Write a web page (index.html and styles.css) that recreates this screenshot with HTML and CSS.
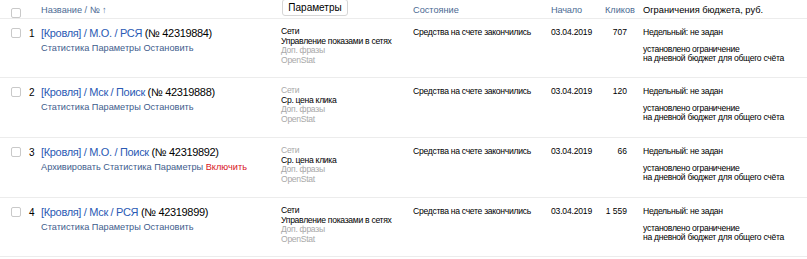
FILE: index.html
```html
<!DOCTYPE html>
<html lang="ru">
<head>
<meta charset="utf-8">
<link rel="stylesheet" href="styles.css">
</head>
<body>
<div class="table">
  <div class="row head">
    <div class="c-check"><span class="cb"></span></div>
    <div class="c-num"></div>
    <div class="c-name"><span class="hl">Название / № ↑</span></div>
    <div class="c-params"><button class="pbtn">Параметры</button></div>
    <div class="c-state"><span class="hl">Состояние</span></div>
    <div class="c-start"><span class="hl">Начало</span></div>
    <div class="c-clicks"><span class="hl">Кликов</span></div>
    <div class="c-budget">Ограничения бюджета, руб.</div>
  </div>

  <div class="row r-short">
    <div class="c-check"><span class="cb"></span></div>
    <div class="c-num">1</div>
    <div class="c-name">
      <div class="title"><a class="tl">[Кровля] / М.О. / РСЯ</a> (№ 42319884)</div>
      <div class="acts"><a>Статистика</a> <a>Параметры</a> <a>Остановить</a></div>
    </div>
    <div class="c-params">
      <div class="p">Сети</div>
      <div class="p">Управление показами в сетях</div>
      <div class="p g">Доп. фразы</div>
      <div class="p g">OpenStat</div>
    </div>
    <div class="c-state">Средства на счете закончились</div>
    <div class="c-start">03.04.2019</div>
    <div class="c-clicks">707</div>
    <div class="c-budget">
      <div>Недельный: не задан</div>
      <div class="lim">установлено ограничение<br>на дневной бюджет для общего счёта</div>
    </div>
  </div>

  <div class="row">
    <div class="c-check"><span class="cb"></span></div>
    <div class="c-num">2</div>
    <div class="c-name">
      <div class="title"><a class="tl">[Кровля] / Мск / Поиск</a> (№ 42319888)</div>
      <div class="acts"><a>Статистика</a> <a>Параметры</a> <a>Остановить</a></div>
    </div>
    <div class="c-params">
      <div class="p g">Сети</div>
      <div class="p">Ср. цена клика</div>
      <div class="p g">Доп. фразы</div>
      <div class="p g">OpenStat</div>
    </div>
    <div class="c-state">Средства на счете закончились</div>
    <div class="c-start">03.04.2019</div>
    <div class="c-clicks">120</div>
    <div class="c-budget">
      <div>Недельный: не задан</div>
      <div class="lim">установлено ограничение<br>на дневной бюджет для общего счёта</div>
    </div>
  </div>

  <div class="row">
    <div class="c-check"><span class="cb"></span></div>
    <div class="c-num">3</div>
    <div class="c-name">
      <div class="title"><a class="tl">[Кровля] / М.О. / Поиск</a> (№ 42319892)</div>
      <div class="acts"><a>Архивировать</a> <a>Статистика</a> <a>Параметры</a> <a class="red">Включить</a></div>
    </div>
    <div class="c-params">
      <div class="p g">Сети</div>
      <div class="p">Ср. цена клика</div>
      <div class="p g">Доп. фразы</div>
      <div class="p g">OpenStat</div>
    </div>
    <div class="c-state">Средства на счете закончились</div>
    <div class="c-start">03.04.2019</div>
    <div class="c-clicks">66</div>
    <div class="c-budget">
      <div>Недельный: не задан</div>
      <div class="lim">установлено ограничение<br>на дневной бюджет для общего счёта</div>
    </div>
  </div>

  <div class="row r-short">
    <div class="c-check"><span class="cb"></span></div>
    <div class="c-num">4</div>
    <div class="c-name">
      <div class="title"><a class="tl">[Кровля] / Мск / РСЯ</a> (№ 42319899)</div>
      <div class="acts"><a>Статистика</a> <a>Параметры</a> <a>Остановить</a></div>
    </div>
    <div class="c-params">
      <div class="p">Сети</div>
      <div class="p">Управление показами в сетях</div>
      <div class="p g">Доп. фразы</div>
      <div class="p g">OpenStat</div>
    </div>
    <div class="c-state">Средства на счете закончились</div>
    <div class="c-start">03.04.2019</div>
    <div class="c-clicks">1 559</div>
    <div class="c-budget">
      <div>Недельный: не задан</div>
      <div class="lim">установлено ограничение<br>на дневной бюджет для общего счёта</div>
    </div>
  </div>
</div>
</body>
</html>
```

FILE: styles.css
```css
* { box-sizing: border-box; }
html, body { margin: 0; padding: 0; background: #fff; }
body {
  font-family: "Liberation Sans", Arial, sans-serif;
  font-size: 8.6px;
  letter-spacing: -0.3px;
  color: #000;
  width: 807px;
  height: 259px;
  overflow: hidden;
}
.table { display: flex; flex-direction: column; }
.row {
  display: grid;
  grid-template-columns: 26px 15px 240px 132px 138px 54px 38px 1fr;
  height: 60px;
  border-bottom: 1px solid #ececec;
  line-height: 10px;
  padding-top: 8px;
}
.row.r-short { height: 59px; }
.row.head {
  height: 19px;
  padding-top: 2px;
  align-items: center;
  line-height: 12px;
  letter-spacing: 0;
}
.hl { color: #4b6a93; font-size: 9.2px; }
.c-check { padding-left: 11px; }
.cb {
  display: block;
  width: 10px;
  height: 10px;
  border: 1px solid #c9c9c9;
  border-radius: 2px;
  background: #fff;
}
.row > .c-check { padding-top: 1px; }
.row.head > .c-check { padding-top: 0; align-self: start; margin-top: 6px; }
.c-num { font-size: 10px; letter-spacing: 0; line-height: 13px; padding-left: 3px; }
.title { font-size: 11px; letter-spacing: -0.33px; line-height: 13px; }
.tl { color: #2a5ab4; }
.acts { margin-top: 3px; font-size: 9.2px; letter-spacing: 0; line-height: 11px; }
.acts a { color: #3e5c8c; }
.acts a.red { color: #d8141c; }
.row.head > .c-params { align-self: start; padding-left: 1px; margin-top: -3px; }
.pbtn {
  display: block;
  font-family: inherit;
  font-size: 10px;
  height: 17px;
  width: 66px;
  padding: 0;
  background: #fff;
  border: 1px solid #d6d6d6;
  border-radius: 3px;
  color: #000;
}
.p { line-height: 9.5px; }
.p.g { color: #a9a9a9; }
.c-start { letter-spacing: -0.2px; }
.c-clicks { text-align: right; padding-right: 16px; font-size: 8.5px; letter-spacing: 0; }
.row.head .c-clicks { text-align: left; padding-right: 0; }
.head .c-budget { font-size: 9.3px; }
.lim { margin-top: 7.75px; line-height: 9.5px; }
```
